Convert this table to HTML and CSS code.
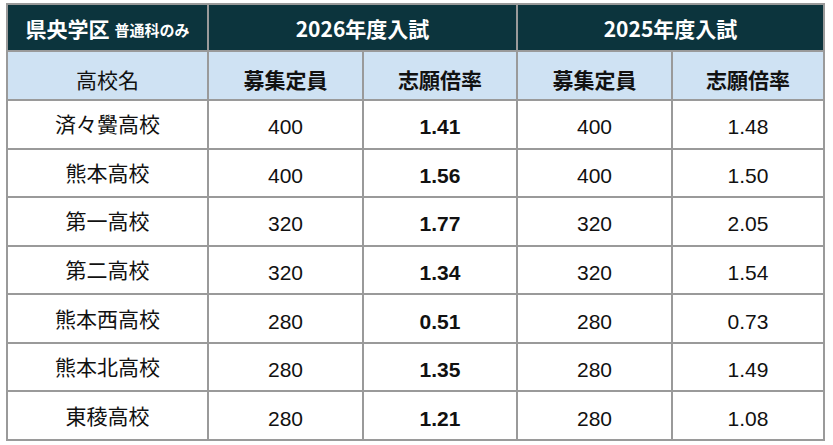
FILE: index.html
```html
<!DOCTYPE html>
<html lang="ja">
<head>
<meta charset="utf-8">
<title>県央学区 入試倍率</title>
<link rel="stylesheet" href="styles.css">
</head>
<body>
<div class="sheet">
  <div class="cell head-dark">県央学区<span class="sub">普通科のみ</span></div>
  <div class="cell head-dark span2">2026年度入試</div>
  <div class="cell head-dark span2">2025年度入試</div>

  <div class="cell head-light">高校名</div>
  <div class="cell head-light strong">募集定員</div>
  <div class="cell head-light strong">志願倍率</div>
  <div class="cell head-light strong">募集定員</div>
  <div class="cell head-light strong">志願倍率</div>

  <div class="cell name">済々黌高校</div><div class="cell num">400</div><div class="cell num bold">1.41</div><div class="cell num">400</div><div class="cell num">1.48</div>
  <div class="cell name">熊本高校</div><div class="cell num">400</div><div class="cell num bold">1.56</div><div class="cell num">400</div><div class="cell num">1.50</div>
  <div class="cell name">第一高校</div><div class="cell num">320</div><div class="cell num bold">1.77</div><div class="cell num">320</div><div class="cell num">2.05</div>
  <div class="cell name">第二高校</div><div class="cell num">320</div><div class="cell num bold">1.34</div><div class="cell num">320</div><div class="cell num">1.54</div>
  <div class="cell name">熊本西高校</div><div class="cell num">280</div><div class="cell num bold">0.51</div><div class="cell num">280</div><div class="cell num">0.73</div>
  <div class="cell name">熊本北高校</div><div class="cell num">280</div><div class="cell num bold">1.35</div><div class="cell num">280</div><div class="cell num">1.49</div>
  <div class="cell name">東稜高校</div><div class="cell num">280</div><div class="cell num bold">1.21</div><div class="cell num">280</div><div class="cell num">1.08</div>
</div>
</body>
</html>
```

FILE: styles.css
```css
html, body {
  margin: 0;
  padding: 0;
  background: #ffffff;
}

body {
  font-family: "Liberation Sans", "Noto Sans CJK JP", sans-serif;
  color: #111111;
}

.sheet {
  display: grid;
  grid-template-columns: 199px 153px 152px 153px 150px;
  grid-template-rows: 45px 47px repeat(7, 46.57px);
  gap: 2px;
  padding: 2px;
  background: #9a9a9a;
  width: max-content;
  margin: 3px 0 0 6px;
}

.cell {
  display: flex;
  align-items: center;
  justify-content: center;
  background: #ffffff;
  white-space: nowrap;
  box-sizing: border-box;
}

.span2 {
  grid-column: span 2;
}

.head-dark {
  background: #0c343d;
  color: #ffffff;
  font-family: "Noto Sans CJK JP", sans-serif;
  font-weight: 700;
  font-size: 21px;
}

.sub {
  font-size: 15px;
  margin-left: 5px;
  padding-top: 4px;
}

.head-light {
  background: #cfe2f3;
  font-family: "Noto Sans CJK JP", sans-serif;
  font-size: 21px;
  font-weight: 400;
  padding-top: 6px;
}

.head-light.strong {
  font-weight: 700;
}

.name {
  font-family: "Noto Sans CJK JP", sans-serif;
  font-size: 21px;
  padding-bottom: 2px;
}

.num {
  font-size: 21px;
  padding-top: 6px;
}

.bold {
  font-weight: 700;
}
```
